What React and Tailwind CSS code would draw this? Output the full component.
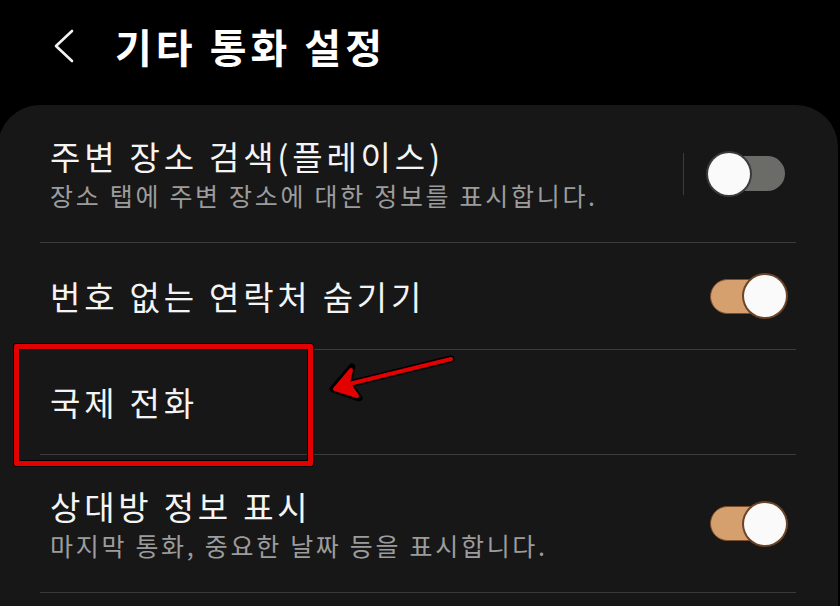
import React from 'react';

const font = { fontFamily: '"Noto Sans CJK KR", "Noto Sans", sans-serif' };

function Toggle({ on }) {
  return (
    <div className="relative w-[78px] h-[44px] flex items-center">
      <div
        className={
          on
            ? 'ml-[2px] w-[72px] h-[35px] rounded-full bg-[#d69f6e] border border-[#7a4e2c]'
            : 'ml-[10px] w-[67px] h-[35px] rounded-full bg-[#6b6c68]'
        }
      />
      <div
        className={
          'absolute top-[1px] w-[42px] h-[42px] rounded-full bg-[#fafafa] ' +
          (on ? 'right-0 shadow-[0_0_0_2px_#6b4326]' : 'left-0 shadow-[0_0_0_2px_#3a3a3a]')
        }
      />
    </div>
  );
}

function Row({ title, sub, toggle, divider, h, last }) {
  return (
    <div className={'flex items-center pl-[10px] pr-[10px] ' + h + (last ? '' : ' border-b border-[#3b3b3b]')}>
      <div className="flex-1 flex flex-col">
        <div className="text-[33px] leading-[42px] tracking-[3.8px] text-[#f4f4f4]">{title}</div>
        {sub && <div className="text-[25px] leading-[36px] tracking-[2.7px] text-[#9c9c9c]">{sub}</div>}
      </div>
      {divider && <div className="w-px h-[42px] bg-[#3d3d3d] mr-[24px]" />}
      {toggle !== undefined && <Toggle on={toggle} />}
    </div>
  );
}

export default function App() {
  return (
    <div className="relative w-[840px] h-[606px] bg-black overflow-hidden" style={font}>
      <header className="h-[105px] flex items-center pl-[52px] pb-[14px]">
        <svg width="24" height="36" viewBox="0 0 24 36" className="mr-[39px]">
          <path d="M20 3 L4 18 L20 33" fill="none" stroke="#f2f2f2" strokeWidth="2.6" strokeLinecap="round" strokeLinejoin="round" />
        </svg>
        <h1 className="text-[40px] font-bold text-white tracking-[4px]">기타 통화 설정</h1>
      </header>

      <div className="mx-[-2px] mr-[2px] rounded-t-[42px] bg-[#171717] px-[42px]">
        <Row h="h-[138px]" title="주변 장소 검색(플레이스)" sub="장소 탭에 주변 장소에 대한 정보를 표시합니다." toggle={false} divider />
        <Row h="h-[107px]" title="번호 없는 연락처 숨기기" toggle={true} />
        <Row h="h-[105px]" title="국제 전화" />
        <Row h="h-[138px]" title="상대방 정보 표시" sub="마지막 통화, 중요한 날짜 등을 표시합니다." toggle={true} />
        <div className="h-[40px]" />
      </div>

      {/* annotation box */}
      <div className="absolute left-[13px] top-[343px] w-[301px] h-[124px] rounded-[3px] border border-black">
        <div className="w-full h-full rounded-[2px] border-[5px] border-[#e30000] ring-1 ring-inset ring-black" />
      </div>

      {/* annotation arrow */}
      <svg className="absolute left-0 top-0" width="840" height="606" viewBox="0 0 840 606">
        <g stroke="#000" strokeWidth="7" strokeLinecap="round" strokeLinejoin="round" fill="#000">
          <line x1="451" y1="359" x2="345" y2="385" />
          <path d="M333 389 L352 367 L348 383 L359 398 Z" />
        </g>
        <g stroke="#e30000" strokeWidth="4" strokeLinecap="round" strokeLinejoin="round" fill="#e30000">
          <line x1="451" y1="359" x2="345" y2="385" />
          <path d="M335 389 L351 370 L348 383 L357 396 Z" />
        </g>
      </svg>
    </div>
  );
}
